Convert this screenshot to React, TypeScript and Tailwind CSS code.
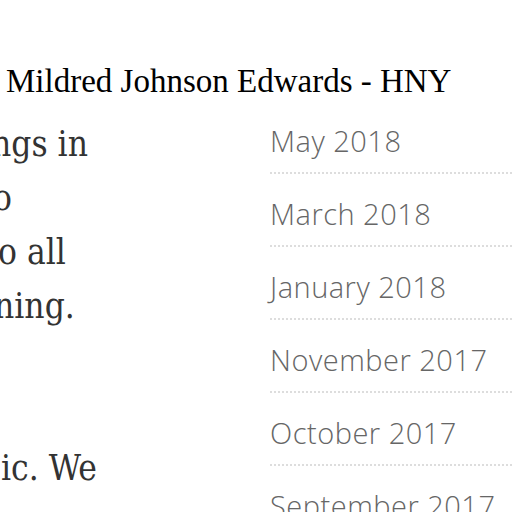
import React from "react";

const months = [
  "May 2018",
  "March 2018",
  "January 2018",
  "November 2017",
  "October 2017",
  "September 2017",
];

export default function App() {
  return (
    <div className="w-[512px] h-[512px] overflow-hidden bg-white">
      <h1
        className="mt-[61px] ml-[6px] text-[33px] leading-[40px] text-black whitespace-nowrap"
        style={{ fontFamily: '"Liberation Serif", "Times New Roman", serif' }}
      >
        Mildred Johnson Edwards - HNY
      </h1>
      <div className="flex items-start">
        <div
          className="w-[270px] shrink-0 overflow-hidden mt-[16px] text-[35px] leading-[54px] text-[#333333] whitespace-nowrap"
          style={{ fontFamily: '"DejaVu Serif Condensed", "DejaVu Serif", Georgia, serif' }}
        >
          <div className="-ml-[9px]">ngs in</div>
          <div className="-ml-[7px]">o</div>
          <div className="-ml-[2px]">o all</div>
          <div className="-ml-[6px]">ning.</div>
          <div>&nbsp;</div>
          <div>&nbsp;</div>
          <div className="ml-[1px]">ic. We</div>
        </div>
        <ul
          className="flex-1 mt-[22px] text-[#666666] font-light whitespace-nowrap"
          style={{ fontFamily: '"Open Sans", Lato, sans-serif' }}
        >
          {months.map((m) => (
            <li
              key={m}
              className="pb-[13px] pt-[22px] first:pt-0 border-b-2 border-dotted border-[#dddddd] text-[29px] leading-[36px] tracking-[0.5px]"
            >
              {m}
            </li>
          ))}
        </ul>
      </div>
    </div>
  );
}
